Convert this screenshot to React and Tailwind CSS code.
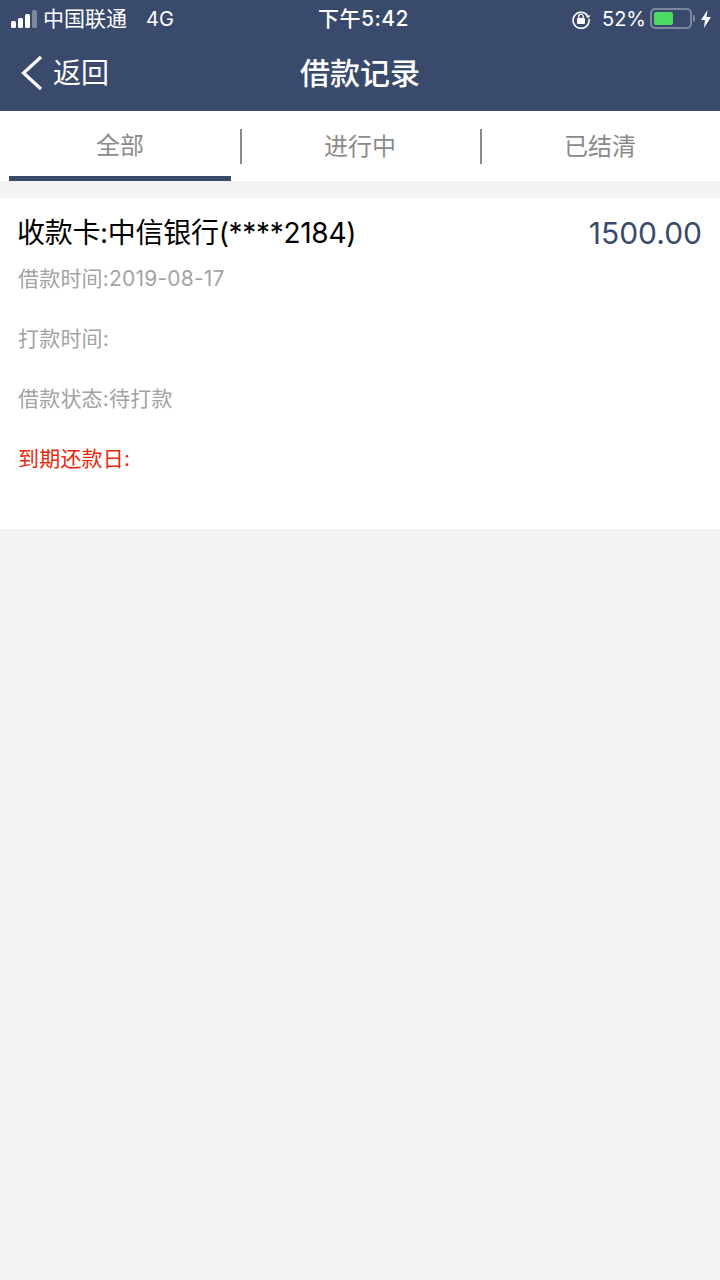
import React from "react";

const font = { fontFamily: 'Inter, "Noto Sans CJK SC", sans-serif' };

function StatusBar() {
  return (
    <div className="h-[37px] flex items-center text-white relative">
      <div className="flex items-center pl-[11px]">
        <div className="flex items-end gap-[2px]">
          <div className="w-[5px] h-[7px] rounded-[1.5px] bg-white" />
          <div className="w-[5px] h-[10px] rounded-[1.5px] bg-white" />
          <div className="w-[5px] h-[14px] rounded-[1.5px] bg-white" />
          <div className="w-[5px] h-[18px] rounded-[1.5px] bg-[#7d879e]" />
        </div>
        <span className="ml-[6px] text-[21px] leading-none">中国联通</span>
        <span className="ml-[19px] text-[20px] leading-none">4G</span>
      </div>
      <div className="absolute left-0 right-0 top-[6px] text-center text-[21px] leading-[25px] font-medium tracking-[0.5px] pl-[7px]">下午5:42</div>
      <div className="ml-auto flex items-center pr-[9px]">
        <svg width="20" height="20" viewBox="0 0 20 20" fill="none">
          <path d="M16.5 6.5A8 8 0 1 0 18 10" stroke="white" strokeWidth="1.6" />
          <path d="M14.5 6.5h5l-2.5 3z" fill="white" />
          <rect x="6" y="9" width="8" height="6" rx="1" fill="white" />
          <path d="M7.8 9V7.4a2.2 2.2 0 0 1 4.4 0V9" stroke="white" strokeWidth="1.3" />
        </svg>
        <span className="ml-[11px] text-[20px] leading-none">52%</span>
        <div className="ml-[4px] w-[42px] h-[21px] rounded-[5px] border-2 border-[#7d879e] p-[2px]">
          <div className="w-[19px] h-full rounded-[2px] bg-[#4cd964]" />
        </div>
        <div className="ml-[1px] w-[2px] h-[7px] rounded-r-sm bg-[#7d879e]" />
        <svg className="ml-[6px]" width="10" height="18" viewBox="0 0 10 18">
          <path d="M6.5 0 0 10h4l-1 8 7-11H5.5z" fill="white" />
        </svg>
      </div>
    </div>
  );
}

function NavBar() {
  return (
    <div className="h-[74px] flex items-center relative text-white">
      <svg className="ml-[20px] mb-[3px]" width="24" height="36" viewBox="0 0 24 36" fill="none">
        <path d="M21 2 3.5 18 21 34" stroke="white" strokeWidth="3.2" />
      </svg>
      <span className="ml-[9px] mb-[3px] text-[28px] leading-none">返回</span>
      <div className="absolute left-0 right-0 top-[16px] text-center text-[30px] leading-[40px] font-medium">借款记录</div>
    </div>
  );
}

function Tabs() {
  return (
    <div className="h-[70px] bg-white flex text-[24px] text-[#8a8a8a]">
      <div className="w-[240px] pl-[9px] pr-[9px] flex flex-col">
        <div className="flex-1 flex items-center justify-center pt-[4px]">全部</div>
        <div className="h-[5px] bg-[#3a4a6d]" />
      </div>
      <div className="w-[240px] flex items-center justify-center relative pt-[2px]">
        <div className="absolute left-0 top-[18px] w-[2px] h-[35px] bg-[#8a8a8a]" />
        进行中
      </div>
      <div className="w-[240px] flex items-center justify-center relative pt-[2px]">
        <div className="absolute left-0 top-[18px] w-[2px] h-[35px] bg-[#8a8a8a]" />
        已结清
      </div>
    </div>
  );
}

function Record() {
  return (
    <div className="mt-[17px] h-[331px] bg-white px-[18px] pt-[16px]">
      <div className="flex justify-between items-center h-[38px]">
        <span className="-ml-[1px] text-[28px] tracking-[-0.3px] text-black">收款卡:中信银行(****2184)</span>
        <span className="text-[30px] text-[#3a4a6d]">1500.00</span>
      </div>
      <div className="mt-[12px] flex flex-col gap-[30px] text-[21px] leading-[30px] tracking-[0.2px] text-[#a3a3a3]">
        <div>借款时间:2019-08-17</div>
        <div>打款时间:</div>
        <div>借款状态:待打款</div>
        <div className="text-[#e8290b]">到期还款日:</div>
      </div>
    </div>
  );
}

export default function App() {
  return (
    <div className="w-[720px] h-[1280px] bg-[#f3f3f3] overflow-hidden" style={font}>
      <div className="bg-[#3a4a6d]">
        <StatusBar />
        <NavBar />
      </div>
      <Tabs />
      <Record />
    </div>
  );
}
